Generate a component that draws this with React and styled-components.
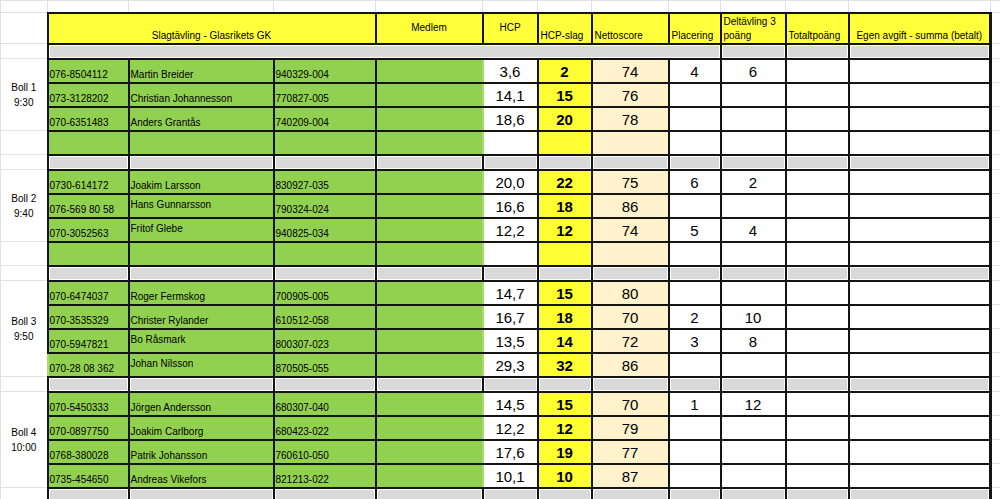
import styled, { createGlobalStyle, css } from "styled-components";

const GlobalStyle = createGlobalStyle`
  html, body {
    margin: 0;
    padding: 0;
    background: #fff;
  }
  body {
    font-family: "Liberation Sans", Arial, sans-serif;
    color: #000;
  }
`;

// column widths, taken from the sheet
const widths = [47, 81, 145, 102, 107, 55, 54, 77, 52, 65, 63, 142, 10];

const groups = [
  {
    label: "Boll 1",
    time: "9:30",
    span: 3,
    players: [
      ["076-8504112", "Martin Breider", "940329-004", "3,6", "2", "74", "4", "6"],
      ["073-3128202", "Christian Johannesson", "770827-005", "14,1", "15", "76"],
      ["070-6351483", "Anders Grantås", "740209-004", "18,6", "20", "78"],
      null,
    ],
  },
  {
    label: "Boll 2",
    time: "9:40",
    span: 3,
    players: [
      ["0730-614172", "Joakim Larsson", "830927-035", "20,0", "22", "75", "6", "2"],
      ["076-569 80 58", "Hans Gunnarsson", "790324-024", "16,6", "18", "86", "", "", true],
      ["070-3052563", "Fritof Glebe", "940825-034", "12,2", "12", "74", "5", "4", true],
      null,
    ],
  },
  {
    label: "Boll 3",
    time: "9:50",
    span: 4,
    players: [
      ["070-6474037", "Roger Fermskog", "700905-005", "14,7", "15", "80"],
      ["070-3535329", "Christer Rylander", "610512-058", "16,7", "18", "70", "2", "10"],
      ["070-5947821", "Bo Råsmark", "800307-023", "13,5", "14", "72", "3", "8", true],
      ["070-28 08 362", "Johan Nilsson", "870505-055", "29,3", "32", "86", "", "", true, true],
    ],
  },
  {
    label: "Boll 4",
    time: "10:00",
    span: 4,
    players: [
      ["070-5450333", "Jörgen Andersson", "680307-040", "14,5", "15", "70", "1", "12"],
      ["070-0897750", "Joakim Carlborg", "680423-022", "12,2", "12", "79"],
      ["0768-380028", "Patrik Johansson", "760610-050", "17,6", "19", "77"],
      ["0735-454650", "Andreas Vikefors", "821213-022", "10,1", "10", "87"],
    ],
  },
];

const Sheet = styled.table`
  width: 1000px;
  table-layout: fixed;
  border-collapse: collapse;
  font-size: 10px;
`;

const Row = styled.tr`
  height: ${(p) => p.$h}px;
`;

const base = css`
  padding: 0 2px;
  border: 1px solid #e1e1e1;
  white-space: nowrap;
  overflow: hidden;
`;

const ink = css`
  border: 2px solid #141414;
  border-right-width: ${(p) => (p.$last ? 3 : 2)}px;
`;

const Blank = styled.td`
  ${base}
`;

const LabelCell = styled.td`
  ${base}
  text-align: center;
  vertical-align: middle;
  line-height: 15px;
`;

const HeadCell = styled.td`
  ${base}
  ${ink}
  background: #ffff3c;
  text-align: ${(p) => p.$align || "left"};
  vertical-align: ${(p) => p.$valign || "bottom"};
  white-space: normal;
  line-height: 14px;
  padding: 0 2px;
`;

const GreenCell = styled.td`
  ${base}
  ${ink}
  background: #92d050;
  vertical-align: ${(p) => (p.$mid ? "middle" : "bottom")};
  line-height: 12px;
  padding: 0 1px 1px;
  ${(p) => p.$edge && "border-right: 2px solid #a8dc6c;"}
  ${(p) => p.$open && "border-left: 2px solid #a8dc6c;"}
`;

const NumCell = styled.td`
  ${base}
  ${ink}
  background: ${(p) => p.$bg || "#fff"};
  text-align: center;
  vertical-align: bottom;
  font-size: 15px;
  font-weight: ${(p) => (p.$bold ? 700 : 400)};
  line-height: 17px;
  padding-bottom: 2px;
`;

const SepCell = styled.td`
  ${base}
  ${ink}
  background: #d9d9d9;
  box-shadow: inset 1px 1px 0 #fff, inset -1px -1px 0 #fff;
`;

const Separator = ({ first }) => (
  <Row $h={15}>
    <Blank />
    {first ? (
      <SepCell colSpan={8} />
    ) : (
      [0, 1, 2, 3, 4, 5, 6, 7].map((i) => <SepCell key={i} />)
    )}
    <SepCell />
    <SepCell />
    <SepCell $last />
    <Blank />
  </Row>
);

const PlayerRow = ({ group, player, index }) => {
  const [phone, name, pnr, hcp, slag, netto, plac, delt, mid, open] = player || [];
  let label = null;
  if (index === 0) {
    label = (
      <LabelCell rowSpan={group.span}>
        {group.label}
        <br />
        {group.time}
      </LabelCell>
    );
  } else if (index >= group.span) {
    label = <Blank />;
  }

  return (
    <Row $h={24}>
      {label}
      <GreenCell $open={open}>{phone}</GreenCell>
      <GreenCell $mid={mid}>{name}</GreenCell>
      <GreenCell>{pnr}</GreenCell>
      <GreenCell $edge />
      <NumCell>{hcp}</NumCell>
      <NumCell $bg="#ffff33" $bold>
        {slag}
      </NumCell>
      <NumCell $bg="#fff2cc">{netto}</NumCell>
      <NumCell>{plac}</NumCell>
      <NumCell>{delt}</NumCell>
      <NumCell />
      <NumCell $last />
      <Blank />
    </Row>
  );
};

const Group = ({ group }) => (
  <>
    {group.players.map((p, i) => (
      <PlayerRow key={i} group={group} player={p} index={i} />
    ))}
    <Separator />
  </>
);

export default function App() {
  return (
    <>
      <GlobalStyle />
      <Sheet>
        <colgroup>
          {widths.map((w, i) => (
            <col key={i} style={{ width: w }} />
          ))}
        </colgroup>
        <tbody>
          <Row $h={12}>
            {widths.map((w, i) => (
              <Blank key={i} />
            ))}
          </Row>
          <Row $h={31}>
            <Blank />
            <HeadCell colSpan={3} $align="center">
              Slagtävling - Glasrikets GK
            </HeadCell>
            <HeadCell $align="center" $valign="middle">
              Medlem
            </HeadCell>
            <HeadCell $align="center" $valign="middle">
              HCP
            </HeadCell>
            <HeadCell>HCP-slag</HeadCell>
            <HeadCell>Nettoscore</HeadCell>
            <HeadCell>Placering</HeadCell>
            <HeadCell>Deltävling 3 poäng</HeadCell>
            <HeadCell>Totaltpoäng</HeadCell>
            <HeadCell $align="center" $last>
              Egen avgift - summa (betalt)
            </HeadCell>
            <Blank />
          </Row>
          <Separator first />
          {groups.map((g) => (
            <Group key={g.label} group={g} />
          ))}
        </tbody>
      </Sheet>
    </>
  );
}
